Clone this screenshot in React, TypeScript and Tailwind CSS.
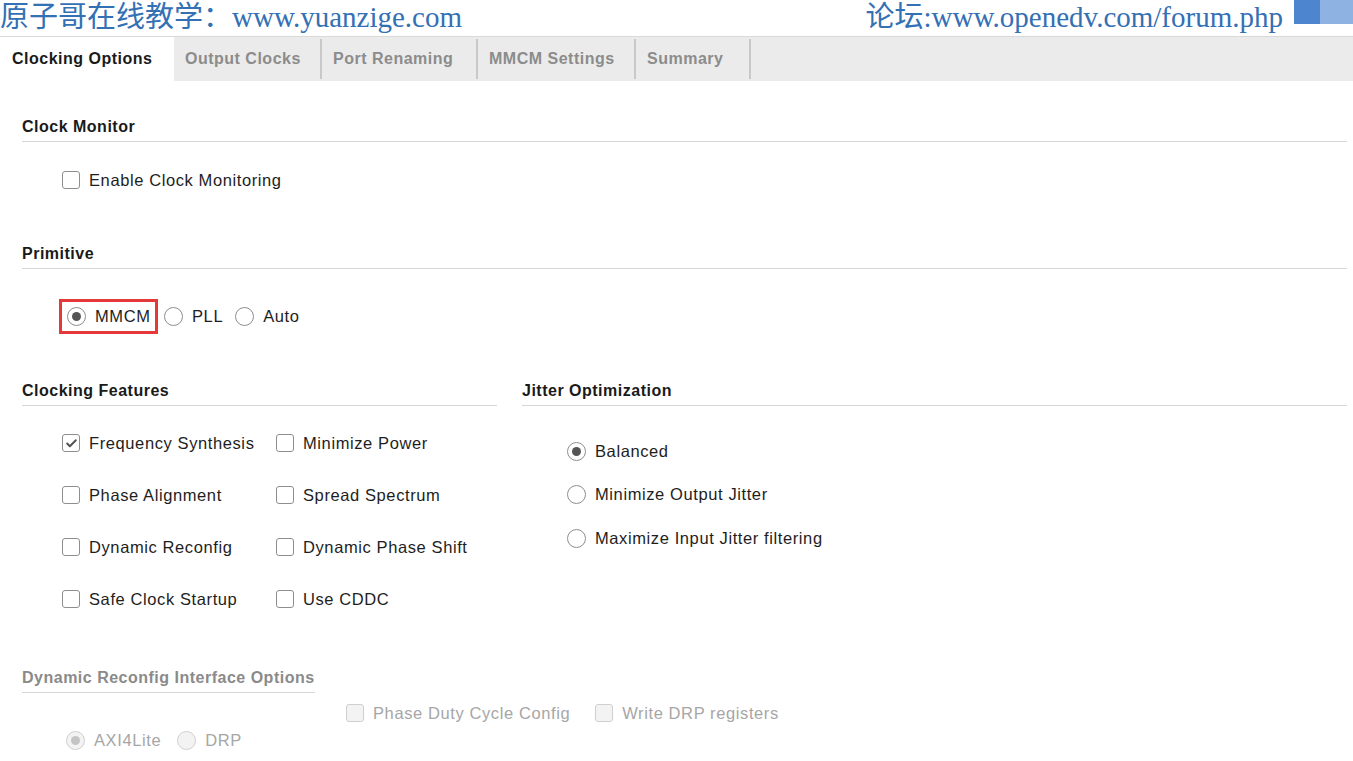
import { Check } from 'lucide-react'

const ui = { fontFamily: '"Liberation Sans", Arial, sans-serif' }
const serif = { fontFamily: '"Liberation Serif", "Noto Sans CJK SC", serif' }

function Box({ checked = false, disabled = false }: { checked?: boolean; disabled?: boolean }) {
  return (
    <span
      className={`flex items-center justify-center w-[18px] h-[18px] rounded-[3px] border shrink-0 ${
        disabled ? 'border-[#cfcfcf] bg-[#f3f3f3]' : 'border-[#8e8e8e] bg-white'
      }`}
    >
      {checked && <Check size={13} strokeWidth={3.5} className="text-[#505050]" />}
    </span>
  )
}

function Radio({ on = false, disabled = false }: { on?: boolean; disabled?: boolean }) {
  return (
    <span
      className={`flex items-center justify-center w-[19px] h-[19px] rounded-full border shrink-0 ${
        disabled ? 'border-[#d0d0d0] bg-[#f3f3f3]' : 'border-[#8e8e8e] bg-white'
      }`}
    >
      {on && <span className={`w-[9px] h-[9px] rounded-full ${disabled ? 'bg-[#c4c4c4]' : 'bg-[#555]'}`} />}
    </span>
  )
}

function CheckItem({ label, checked, disabled }: { label: string; checked?: boolean; disabled?: boolean }) {
  return (
    <div className="flex items-center gap-[9px] h-[20px]">
      <Box checked={checked} disabled={disabled} />
      <span className={`text-[16.5px] tracking-[0.6px] ${disabled ? 'text-[#a6a6a6]' : 'text-[#1e1e1e]'}`}>{label}</span>
    </div>
  )
}

function RadioItem({ label, on, disabled }: { label: string; on?: boolean; disabled?: boolean }) {
  return (
    <div className="flex items-center gap-[9px] h-[20px]">
      <Radio on={on} disabled={disabled} />
      <span className={`text-[16.5px] tracking-[0.6px] ${disabled ? 'text-[#a6a6a6]' : 'text-[#1e1e1e]'}`}>{label}</span>
    </div>
  )
}

function Heading({ children, muted }: { children: string; muted?: boolean }) {
  return (
    <div className="border-b border-[#d6d6d6] pb-[5px]">
      <div className={`text-[16px] tracking-[0.5px] font-bold leading-[18px] ${muted ? 'text-[#8a8a8a]' : 'text-[#1a1a1a]'}`}>
        {children}
      </div>
    </div>
  )
}

const tabs = ['Output Clocks', 'Port Renaming', 'MMCM Settings', 'Summary']
const tabWidths = ['w-[148px]', 'w-[156px]', 'w-[158px]', 'w-[115px]']

export default function App() {
  return (
    <div className="w-[1353px] h-[761px] bg-white overflow-hidden" style={ui}>
      {/* 页眉 */}
      <div className="flex items-start justify-between h-[36px]">
        <div className="text-[29px] leading-[34px] text-[#3470b4] whitespace-nowrap" style={serif}>
          原子哥在线教学：www.yuanzige.com
        </div>
        <div className="flex items-start">
          <div className="text-[29px] leading-[34px] text-[#3470b4] whitespace-nowrap mr-[11px]" style={serif}>
            论坛:www.openedv.com/forum.php
          </div>
          <div className="w-[26px] h-[24px] bg-[#4d86cf]" />
          <div className="w-[33px] h-[24px] bg-[#8eb2e2]" />
        </div>
      </div>

      {/* 标签栏 */}
      <div className="flex h-[45px] bg-[#ebebeb] border-t border-[#d9d9d9]">
        <div className="flex items-center w-[174px] bg-white pl-[12px] text-[16px] tracking-[0.5px] font-bold text-[#1a1a1a]">
          Clocking Options
        </div>
        {tabs.map((t, i) => (
          <div
            key={t}
            className={`flex items-center ${tabWidths[i]} border-r-2 border-[#c8c8c8] my-[2px] pl-[11px] text-[16px] tracking-[0.5px] font-bold text-[#8c8c8c]`}
          >
            {t}
          </div>
        ))}
      </div>

      <div className="px-[22px] pr-[6px]">
        {/* Clock Monitor */}
        <div className="mt-[37px]">
          <Heading>Clock Monitor</Heading>
        </div>
        <div className="mt-[28px] pl-[40px]">
          <CheckItem label="Enable Clock Monitoring" />
        </div>

        {/* Primitive */}
        <div className="mt-[55px]">
          <Heading>Primitive</Heading>
        </div>
        <div className="mt-[30px] flex items-center gap-[6px] pl-[37px]">
          <div className="flex items-center h-[35px] w-[99px] border-[3px] border-[#e53838] pl-[5px]">
            <RadioItem label="MMCM" on />
          </div>
          <RadioItem label="PLL" />
          <div className="ml-[6px]">
            <RadioItem label="Auto" />
          </div>
        </div>

        {/* Clocking Features / Jitter */}
        <div className="mt-[48px] flex gap-[25px]">
          <div className="w-[475px]">
            <Heading>Clocking Features</Heading>
            <div className="mt-[27px] pl-[40px] grid grid-cols-[214px_1fr] gap-y-[32px]">
              <CheckItem label="Frequency Synthesis" checked />
              <CheckItem label="Minimize Power" />
              <CheckItem label="Phase Alignment" />
              <CheckItem label="Spread Spectrum" />
              <CheckItem label="Dynamic Reconfig" />
              <CheckItem label="Dynamic Phase Shift" />
              <CheckItem label="Safe Clock Startup" />
              <CheckItem label="Use CDDC" />
            </div>
          </div>
          <div className="flex-1">
            <Heading>Jitter Optimization</Heading>
            <div className="mt-[35px] pl-[45px] flex flex-col gap-[23.5px]">
              <RadioItem label="Balanced" on />
              <RadioItem label="Minimize Output Jitter" />
              <RadioItem label="Maximize Input Jitter filtering" />
            </div>
          </div>
        </div>

        {/* Dynamic Reconfig Interface Options */}
        <div className="mt-[60px] w-[293px]">
          <Heading muted>Dynamic Reconfig Interface Options</Heading>
        </div>
        <div className="mt-[10px] pl-[324px] flex gap-[25px]">
          <CheckItem label="Phase Duty Cycle Config" disabled />
          <CheckItem label="Write DRP registers" disabled />
        </div>
        <div className="mt-[7px] pl-[44px] flex gap-[16px]">
          <RadioItem label="AXI4Lite" on disabled />
          <RadioItem label="DRP" disabled />
        </div>
      </div>
    </div>
  )
}
